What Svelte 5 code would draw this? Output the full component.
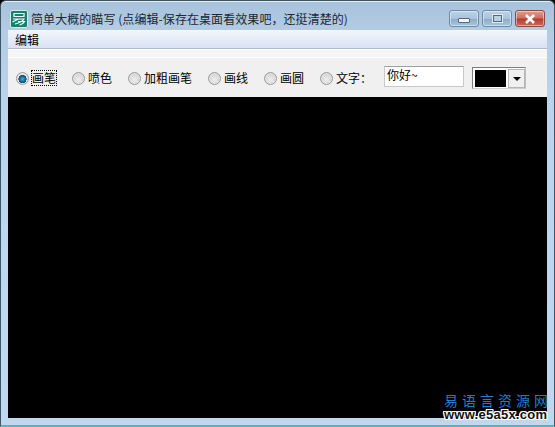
<script>
  const tools = [
    { label: '画笔', width: 56, checked: true },
    { label: '喷色', width: 56 },
    { label: '加粗画笔', width: 80 },
    { label: '画线', width: 56 },
    { label: '画圆', width: 56 },
    { label: '文字：', width: 64 }
  ];
</script>

<div class="window">
  <div class="titlebar">
    <svg class="app-icon" width="18" height="18" viewBox="0 0 18 18">
      <rect x="0.5" y="0.5" width="17" height="17" rx="1.5" fill="#17806f" stroke="#cfeee0" />
      <path d="M4 3.5h10v3H4z" fill="none" stroke="#fff" stroke-width="1.2" />
      <path d="M3 9h11c-2 3-5 4-9 5M8 11.5h6.5c-1 2-2.5 3-5 3.5M2.5 12l6-3" fill="none" stroke="#fff" stroke-width="1.2" />
    </svg>
    <span class="title">简单大概的瞄写 (点编辑-保存在桌面看效果吧，还挺清楚的)</span>
    <div class="controls">
      <div class="ctl min"><i></i></div>
      <div class="ctl max"><i></i></div>
      <div class="ctl close">
        <svg width="14" height="10" viewBox="0 0 14 10">
          <path d="M3 1l8 8M11 1l-8 8" stroke="#fff" stroke-width="2.6" fill="none" />
        </svg>
      </div>
    </div>
  </div>

  <div class="client">
    <div class="menubar"><span>编辑</span></div>
    <div class="toolbar">
      {#each tools as tool}
        <div class="tool" style="width: {tool.width}px">
          <span class="radio" class:checked={tool.checked}></span>
          <span class="label" class:focused={tool.checked}>{tool.label}</span>
        </div>
      {/each}
      <div class="textbox">你好~</div>
      <div class="combo">
        <div class="swatch"></div>
        <div class="arrow"><b></b></div>
      </div>
    </div>
    <div class="canvas">
      <div class="watermark">
        <div class="wm-cn">易语言资源网</div>
        <div class="wm-url">www.e5a5x.com</div>
      </div>
    </div>
  </div>
</div>

<style>
  :global(body) {
    margin: 0;
    background: #000;
  }

  .window {
    width: 555px;
    height: 427px;
    box-sizing: border-box;
    padding: 0 7px 7px;
    background: linear-gradient(to bottom, #a7c2dc 0, #b4cce3 30px, #bcd3ec 100px, #bfd8f0 100%);
    border-radius: 6px 6px 0 0;
    box-shadow: inset 0 1px 0 #e4edf6;
    border: 1px solid #3e5664;
    border-bottom: 2px solid #5fb0b5;
    font-family: "Noto Sans CJK SC", sans-serif;
    font-size: 12px;
    color: #000;
    display: flex;
    flex-direction: column;
  }

  .titlebar {
    height: 29px;
    flex: none;
    display: flex;
    align-items: flex-start;
    margin-left: 2px;
  }

  .app-icon {
    flex: none;
    margin-top: 9px;
  }

  .title {
    margin-left: 3px;
    margin-top: 10px;
    line-height: 16px;
    font-size: 12px;
    letter-spacing: 0.07px;
    color: #1b2733;
    white-space: nowrap;
    flex: 1;
  }

  .controls {
    display: flex;
    gap: 3px;
    margin-top: 9px;
    margin-right: 2px;
  }

  .ctl {
    width: 30px;
    height: 17px;
    box-sizing: border-box;
    border: 1px solid #6d8aa6;
    border-radius: 3px;
    box-shadow: inset 0 0 0 1px rgba(255, 255, 255, 0.45);
    background: linear-gradient(to bottom, #bcd3e8 0, #a9c3db 50%, #8dabc6 52%, #a8c6dd 100%);
    display: flex;
    align-items: center;
    justify-content: center;
  }

  .min i {
    width: 10px;
    height: 3px;
    margin-top: 3px;
    background: #f2f6fa;
    border: 1px solid #55697c;
    border-radius: 1px;
  }

  .max i {
    width: 7px;
    height: 5px;
    border: 1px solid #55697c;
    outline: 1px solid #dfe9f2;
    background: #b9cfe2;
  }

  .close {
    border-color: #8d4a44;
    background: linear-gradient(to bottom, #dd9a90 0, #cf6f62 48%, #b8392d 52%, #cb6a58 100%);
  }

  .client {
    flex: 1;
    display: flex;
    flex-direction: column;
    min-height: 0;
  }

  .menubar {
    height: 19px;
    flex: none;
    box-sizing: border-box;
    padding-left: 7px;
    background: linear-gradient(to bottom, #f3f6fc, #d9e2f3);
    border-bottom: 1px solid #b3b8c6;
    line-height: 19px;
  }

  .toolbar {
    height: 48px;
    flex: none;
    box-sizing: border-box;
    border-top: 1px solid #fff;
    background: linear-gradient(to bottom, #f5f5f5 0, #f5f5f5 7px, #fff 7px, #fff 8px, #f0f0f0 8px);
    display: flex;
    align-items: flex-start;
    padding-left: 8px;
    padding-top: 16px;
  }

  .tool {
    flex: none;
    display: flex;
    align-items: center;
    gap: 3px;
    margin-top: 5px;
  }

  .radio {
    width: 11px;
    height: 11px;
    flex: none;
    border-radius: 50%;
    border: 1px solid #9a9a9a;
    background: radial-gradient(circle at 50% 60%, #eeeeee 0, #c8c8c8 100%);
    box-shadow: inset 0 0 0 1px #e4e4e4;
  }

  .radio.checked {
    background: radial-gradient(circle at 50% 55%, #3fb0d8 0, #1c6f9e 30%, #14486e 48%, #e6e6e6 52%);
    box-shadow: none;
  }

  .label {
    line-height: 14px;
    white-space: nowrap;
    outline: 1px solid transparent;
  }

  .label.focused {
    outline: 1px dotted #000;
  }

  .textbox {
    width: 80px;
    height: 21px;
    box-sizing: border-box;
    flex: none;
    padding-left: 2px;
    background: #fff;
    border: 1px solid #c8c8c8;
    border-top-color: #9f9f9f;
    line-height: 16px;
  }

  .combo {
    width: 54px;
    height: 22px;
    flex: none;
    box-sizing: border-box;
    margin-left: 8px;
    margin-top: 1px;
    padding: 2px 0 1px 2px;
    background: #fff;
    border: 1px solid #7f7f7f;
    border-right-color: #bdbdbd;
    border-bottom-color: #cfcfcf;
    display: flex;
    gap: 2px;
  }

  .swatch {
    flex: 1;
    background: #000;
  }

  .arrow {
    width: 17px;
    margin: -1px 0 -1px 0;
    box-sizing: border-box;
    background: #f0f0f0;
    border: 1px solid #b5b5b5;
    display: flex;
    align-items: center;
    justify-content: center;
  }

  .arrow b {
    border: 4px solid transparent;
    border-top-color: #000;
    border-bottom: 0;
  }

  .canvas {
    flex: 1;
    background: #000;
    position: relative;
  }

  .watermark {
    position: absolute;
    right: -5px;
    bottom: -3px;
    width: 110px;
    text-align: left;
  }

  .wm-cn {
    color: #1e7fd0;
    font-size: 14px;
    line-height: 15px;
    letter-spacing: 4px;
    padding-left: 2px;
    font-family: "Noto Sans CJK SC", sans-serif;
  }

  .wm-url {
    color: #111;
    font-family: "Liberation Sans", sans-serif;
    font-size: 13px;
    font-weight: bold;
    line-height: 13px;
    letter-spacing: 0.25px;
    padding-left: 2px;
    white-space: nowrap;
    text-shadow: 1px 0 0 #fff, -1px 0 0 #fff, 0 1px 0 #fff, 0 -1px 0 #fff, 1px 1px 0 #fff, -1px -1px 0 #fff, 1px -1px 0 #fff, -1px 1px 0 #fff;
  }
</style>
